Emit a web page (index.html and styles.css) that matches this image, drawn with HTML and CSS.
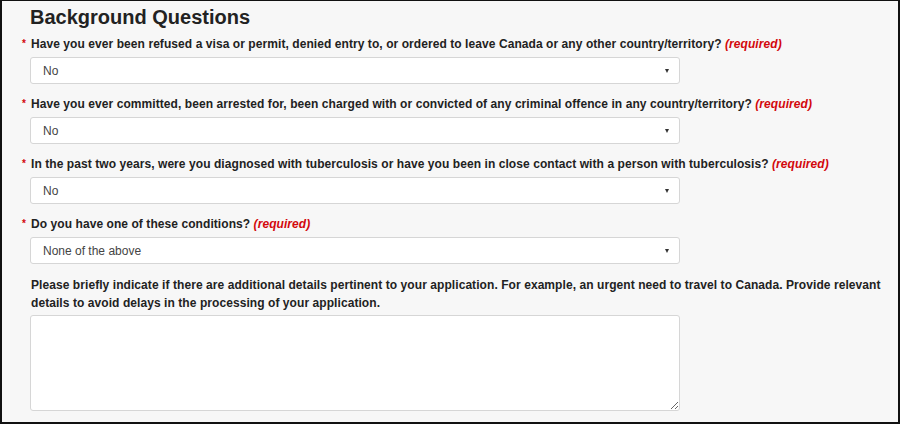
FILE: index.html
```html
<!DOCTYPE html>
<html>
<head>
<meta charset="utf-8">
<link rel="stylesheet" href="styles.css">
</head>
<body>
<div class="frame">
  <h2 class="title">Background Questions</h2>

  <div class="field">
    <label class="label"><span class="star">*</span>Have you ever been refused a visa or permit, denied entry to, or ordered to leave Canada or any other country/territory? <em class="req">(required)</em></label>
    <div class="select-wrap"><select class="select"><option>No</option></select></div>
  </div>

  <div class="field">
    <label class="label"><span class="star">*</span>Have you ever committed, been arrested for, been charged with or convicted of any criminal offence in any country/territory? <em class="req">(required)</em></label>
    <div class="select-wrap"><select class="select"><option>No</option></select></div>
  </div>

  <div class="field">
    <label class="label"><span class="star">*</span>In the past two years, were you diagnosed with tuberculosis or have you been in close contact with a person with tuberculosis? <em class="req">(required)</em></label>
    <div class="select-wrap"><select class="select"><option>No</option></select></div>
  </div>

  <div class="field">
    <label class="label"><span class="star">*</span>Do you have one of these conditions? <em class="req">(required)</em></label>
    <div class="select-wrap"><select class="select"><option>None of the above</option></select></div>
  </div>

  <div class="field field-text">
    <label class="label plain">Please briefly indicate if there are additional details pertinent to your application. For example, an urgent need to travel to Canada. Provide relevant details to avoid delays in the processing of your application.</label>
    <textarea class="textarea"></textarea>
  </div>
</div>
</body>
</html>
```
FILE: styles.css
```css
html, body {
  margin: 0;
  padding: 0;
}
body {
  font-family: "Liberation Sans", Arial, sans-serif;
  background: #f7f7f7;
}
.frame {
  width: 900px;
  height: 424px;
  box-sizing: border-box;
  border-style: solid;
  border-color: #111;
  border-width: 1px 2px 2px 2px;
  background: #f7f7f7;
  padding: 0 0 0 28px;
  overflow: hidden;
  color: #222;
}
.title {
  margin: 4px 0 0 0;
  font-size: 20px;
  line-height: 24px;
  font-weight: bold;
  color: #222;
}
.field {
  display: flex;
  flex-direction: column;
  margin-bottom: 11px;
}
.field:first-of-type {
  margin-top: 6px;
}
.label {
  position: relative;
  font-size: 12px;
  letter-spacing: 0.07px;
  line-height: 18px;
  font-weight: bold;
  color: #222;
  padding-left: 1px;
  margin-bottom: 4px;
}
.star {
  position: absolute;
  left: -8px;
  top: 0;
  color: #d3080c;
  font-size: 10px;
}
.req {
  color: #d3080c;
  font-style: italic;
  font-weight: bold;
}
.select-wrap {
  position: relative;
  width: 650px;
}
.select {
  appearance: none;
  -webkit-appearance: none;
  width: 650px;
  height: 27px;
  box-sizing: border-box;
  border: 1px solid #d6d6d6;
  border-radius: 3px;
  background: #fff;
  font-family: "Liberation Sans", Arial, sans-serif;
  font-size: 12px;
  color: #444;
  padding: 0 0 0 12px;
  margin: 0;
}
.select-wrap::after {
  content: "";
  position: absolute;
  right: 11px;
  top: 12px;
  border-left: 2.5px solid transparent;
  border-right: 2.5px solid transparent;
  border-top: 4px solid #333;
}
.field-text .label {
  margin-top: 1px;
  margin-bottom: 3px;
  padding-right: 10px;
}
.textarea {
  width: 650px;
  height: 96px;
  box-sizing: border-box;
  border: 1px solid #d6d6d6;
  border-radius: 3px;
  background: #fff;
  margin: 0;
  resize: both;
}
```
